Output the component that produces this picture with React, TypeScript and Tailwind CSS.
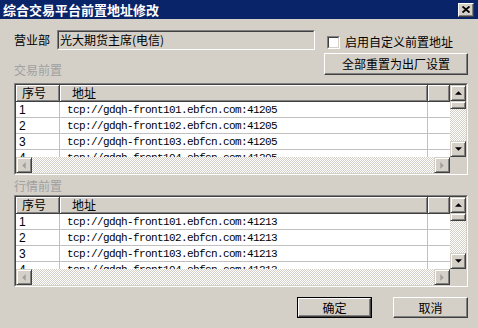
import React from "react";

const rowsTrade = ["41205", "41205", "41205", "41205"];

function Tri({ dir, disabled }: { dir: "up" | "down" | "left" | "right"; disabled?: boolean }) {
  const pts: Record<string, string> = {
    up: "3,0 6,3 0,3",
    down: "0,0 6,0 3,3",
    left: "3,0 3,6 0,3",
    right: "0,0 0,6 3,3",
  };
  const w = dir === "up" || dir === "down" ? 7 : 4;
  const h = dir === "up" || dir === "down" ? 4 : 7;
  return (
    <svg width={w} height={h} viewBox={`0 0 ${w - 1} ${h - 1}`} className="block">
      <polygon points={pts[dir]} fill={disabled ? "#a0a0a0" : "#000"} />
    </svg>
  );
}

function SBtn({ dir, disabled }: { dir: "up" | "down" | "left" | "right"; disabled?: boolean }) {
  return (
    <div className="flex h-[16px] w-[16px] shrink-0 items-center justify-center border border-t-[#d4d0c8] border-l-[#d4d0c8] border-r-[#404040] border-b-[#404040] bg-[#d4d0c8] shadow-[inset_1px_1px_0_#fff,inset_-1px_-1px_0_#808080]">
      <Tri dir={dir} disabled={disabled} />
    </div>
  );
}

function ListView({ port }: { port: string }) {
  const rows = [1, 2, 3, 4];
  return (
    <div className="h-[92px] border border-t-[#808080] border-l-[#808080] border-r-white border-b-white">
      <div className="flex h-full flex-col border border-t-[#404040] border-l-[#404040] border-r-[#d4d0c8] border-b-[#d4d0c8] bg-white">
        <div className="flex h-[72px]">
          <div className="flex flex-1 flex-col overflow-hidden">
            <div className="flex h-[17px] shrink-0 text-[12px] leading-[15px] text-black">
              <div className="w-[44px] shrink-0 border-r border-b border-[#404040] bg-[#d4d0c8] pl-[6px] shadow-[inset_1px_1px_0_#fff,inset_-1px_-1px_0_#808080]">
                序号
              </div>
              <div className="w-[368px] shrink-0 border-r border-b border-[#404040] bg-[#d4d0c8] pl-[12px] shadow-[inset_1px_1px_0_#fff,inset_-1px_-1px_0_#808080]">
                地址
              </div>
              <div className="flex-1 border-r border-b border-[#404040] bg-[#d4d0c8] shadow-[inset_1px_1px_0_#fff,inset_-1px_-1px_0_#808080]" />
            </div>
            {rows.map((n) => (
              <div key={n} className="flex h-[16px] shrink-0 border-b border-[#c0c0c0] text-black">
                <div className="w-[44px] shrink-0 border-r border-[#c0c0c0] pl-[3px] font-['Liberation_Sans',sans-serif] text-[12px] leading-[16px]">
                  {n}
                </div>
                <div className="w-[368px] shrink-0 border-r border-[#c0c0c0] pl-[7px] font-['Liberation_Mono',monospace] text-[11px] leading-[16px] tracking-[-0.6px]">
                  {`tcp://gdqh-front10${n}.ebfcn.com:${port}`}
                </div>
                <div className="flex-1" />
              </div>
            ))}
          </div>
          <div className="flex w-[16px] shrink-0 flex-col">
            <SBtn dir="up" />
            <div className="h-[8px] shrink-0 border border-t-[#d4d0c8] border-l-[#d4d0c8] border-r-[#404040] border-b-[#404040] bg-[#d4d0c8] shadow-[inset_1px_1px_0_#fff,inset_-1px_-1px_0_#808080]" />
            <div className="flex-1 bg-[repeating-conic-gradient(#fff_0_25%,#d4d0c8_0_50%)] bg-[length:2px_2px]" />
            <SBtn dir="down" />
          </div>
        </div>
        <div className="flex h-[16px] shrink-0">
          <SBtn dir="left" disabled />
          <div className="flex-1 bg-[repeating-conic-gradient(#fff_0_25%,#d4d0c8_0_50%)] bg-[length:2px_2px]" />
          <SBtn dir="right" disabled />
          <div className="w-[16px] shrink-0 bg-[#d4d0c8]" />
        </div>
      </div>
    </div>
  );
}

function Button({ children, w, isDefault }: { children: React.ReactNode; w: string; isDefault?: boolean }) {
  const inner = (
    <div className="flex h-full w-full items-center justify-center border border-t-white border-l-white border-r-[#404040] border-b-[#404040] bg-[#d4d0c8] text-[12px] text-black shadow-[inset_-1px_-1px_0_#808080]">
      {children}
    </div>
  );
  if (isDefault) {
    return <div className={`${w} h-[21px] border border-black`}>{inner}</div>;
  }
  return <div className={`${w} h-[21px]`}>{inner}</div>;
}

export default function App() {
  void rowsTrade;
  return (
    <div className="flex h-[328px] w-[478px] flex-col overflow-hidden bg-[#d4d0c8] font-['Noto_Sans_CJK_SC',sans-serif] text-[12px] text-black">
      <div className="flex h-[19px] shrink-0 items-center bg-[#0a246a] pl-[3px] pr-[4px]">
        <div className="flex-1 text-[13px] font-bold leading-[18px] text-white">综合交易平台前置地址修改</div>
        <div className="flex h-[14px] w-[16px] items-center justify-center border border-t-white border-l-white border-r-[#404040] border-b-[#404040] bg-[#d4d0c8] shadow-[inset_-1px_-1px_0_#808080]">
          <svg width="8" height="7" viewBox="0 0 8 7" className="block">
            <path d="M0.5 0.5 L7.5 6.5 M7.5 0.5 L0.5 6.5" stroke="#000" strokeWidth="1.8" />
          </svg>
        </div>
      </div>
      <div className="flex flex-1 flex-col pl-[14px] pr-[10px]">
        <div className="mt-[11px] flex h-[20px] items-start">
          <div className="h-[20px] w-[43px] leading-[20px]">营业部</div>
          <div className="h-[20px] w-[258px] border border-t-[#808080] border-l-[#808080] border-r-white border-b-white">
            <div className="h-full border border-t-[#404040] border-l-[#404040] border-r-[#d4d0c8] border-b-[#d4d0c8] pl-[1px] leading-[16px]">
              光大期货主席(电信)
            </div>
          </div>
          <div className="ml-[12px] mt-[5px] flex h-[14px] items-center">
            <div className="h-[13px] w-[13px] border border-t-[#808080] border-l-[#808080] border-r-white border-b-white">
              <div className="h-full border border-t-[#404040] border-l-[#404040] border-r-[#d4d0c8] border-b-[#d4d0c8] bg-white" />
            </div>
            <div className="ml-[5px] leading-[14px]">启用自定义前置地址</div>
          </div>
        </div>
        <div className="mt-[3px] flex h-[22px] items-end">
          <div className="mb-[-2px] leading-[14px] text-[#a0a0a0]">交易前置</div>
          <div className="ml-auto h-[22px] w-[144px]">
            <div className="flex h-full w-full items-center justify-center border border-t-white border-l-white border-r-[#404040] border-b-[#404040] bg-[#d4d0c8] shadow-[inset_-1px_-1px_0_#808080]">
              全部重置为出厂设置
            </div>
          </div>
        </div>
        <div className="mt-[8px]">
          <ListView port="41205" />
        </div>
        <div className="mt-[4px] h-[14px] leading-[14px] text-[#a0a0a0]">行情前置</div>
        <div className="mt-[2px]">
          <ListView port="41213" />
        </div>
        <div className="mt-[10px] flex justify-end gap-[21px]">
          <Button w="w-[75px]" isDefault>
            确定
          </Button>
          <Button w="w-[75px]">取消</Button>
        </div>
      </div>
    </div>
  );
}
